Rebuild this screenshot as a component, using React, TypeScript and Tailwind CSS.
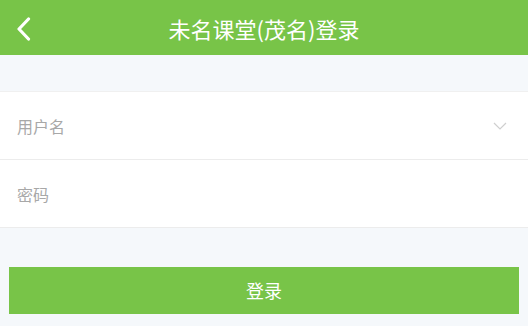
export default function App() {
  return (
    <div
      className="w-[528px] h-[326px] bg-[#f5f8fb] flex flex-col overflow-hidden"
      style={{ fontFamily: '"Noto Sans CJK SC", "Noto Sans", sans-serif' }}
    >
      <header className="h-[55px] bg-[#78c448] flex items-center relative">
        <button className="absolute left-[16px] top-[17px] text-white">
          <svg width="15" height="24" viewBox="0 0 15 24" fill="none">
            <polyline
              points="12.5,2 3,12 12.5,22"
              stroke="currentColor"
              strokeWidth="3.2"
              strokeLinecap="round"
              strokeLinejoin="round"
            />
          </svg>
        </button>
        <h1 className="flex-1 text-center text-white text-[22px] leading-none">
          未名课堂(茂名)登录
        </h1>
      </header>

      <div className="h-[36px]" />

      <div className="bg-white border-t border-[#f0f0f0]">
        <div className="h-[68px] flex items-center justify-between pl-[17px] pr-[21px] border-b border-[#ececec]">
          <span className="text-[16px] text-[#a8a8a8]">用户名</span>
          <svg width="14" height="8" viewBox="0 0 14 8" fill="none" className="text-[#cfcfcf]">
            <polyline points="1,1 7,7 13,1" stroke="currentColor" strokeWidth="1.2" />
          </svg>
        </div>
        <div className="h-[68px] flex items-center pl-[17px] border-b border-[#ececec]">
          <span className="text-[16px] text-[#a8a8a8]">密码</span>
        </div>
      </div>

      <div className="h-[39px]" />

      <button className="mx-[9px] h-[47px] bg-[#78c448] text-white text-[18px] flex items-center justify-center">
        登录
      </button>
    </div>
  );
}
